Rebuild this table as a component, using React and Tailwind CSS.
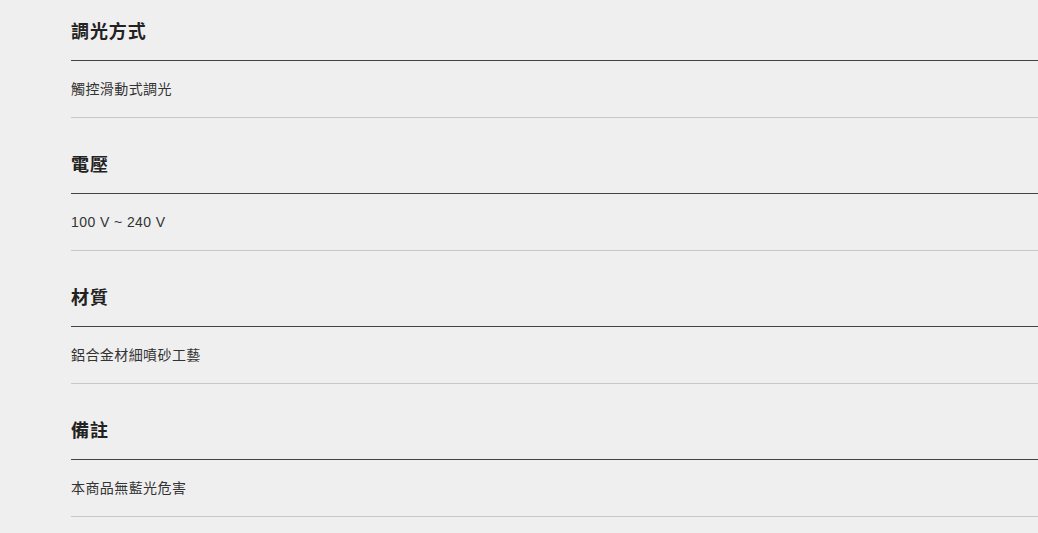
const SPECS = [
  { title: "調光方式", value: "觸控滑動式調光" },
  { title: "電壓", value: "100 V ~ 240 V" },
  { title: "材質", value: "鋁合金材細噴砂工藝" },
  { title: "備註", value: "本商品無藍光危害" },
];

export default function App() {
  return (
    <div
      className="min-h-[533px] bg-[#efefef] overflow-hidden pl-[71px]"
      style={{ fontFamily: '"Liberation Sans", "Noto Sans CJK TC", sans-serif' }}
    >
      <div className="-mt-[15px]">
        {SPECS.map((spec) => (
          <section key={spec.title} className="border-b border-[#c8c8c8]">
            {/* Heading */}
            <div className="pt-[34px] pb-[15px] border-b border-[#444]">
              <h3 className="text-[18px] leading-[26px] font-bold tracking-[0.05em] text-[#222]">
                {spec.title}
              </h3>
            </div>
            {/* Value */}
            <div className="pt-[18px] pb-[18px]">
              <p className="text-[14px] leading-[20px] tracking-[0.03em] text-[#333]">
                {spec.value}
              </p>
            </div>
          </section>
        ))}
      </div>
    </div>
  );
}
